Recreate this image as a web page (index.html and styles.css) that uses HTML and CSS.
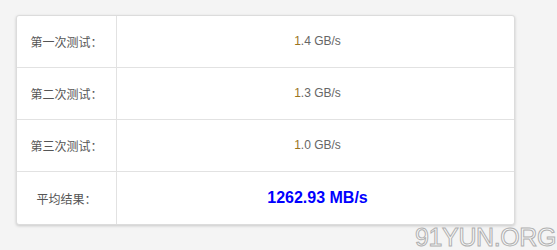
FILE: index.html
```html
<!DOCTYPE html>
<html lang="zh">
<head>
<meta charset="utf-8">
<link rel="stylesheet" href="styles.css">
</head>
<body>
<div class="card">
  <div class="row">
    <div class="label">第一次测试：</div>
    <div class="value"><span class="lead">1</span>.4 GB/s</div>
  </div>
  <div class="row">
    <div class="label">第二次测试：</div>
    <div class="value"><span class="lead">1</span>.3 GB/s</div>
  </div>
  <div class="row">
    <div class="label">第三次测试：</div>
    <div class="value"><span class="lead">1</span>.0 GB/s</div>
  </div>
  <div class="row last">
    <div class="label">平均结果：</div>
    <div class="value big">1262.93 MB/s</div>
  </div>
</div>
<div class="watermark">91YUN.ORG</div>
</body>
</html>
```
FILE: styles.css
```css
html, body {
  margin: 0;
  background: #f4f4f4;
}
body {
  padding: 15px 16px;
  width: 557px;
  height: 250px;
  box-sizing: border-box;
  position: relative;
  overflow: hidden;
  font-family: "Liberation Sans", Arial, "Noto Sans CJK SC", sans-serif;
}
.card {
  width: 499px;
  box-sizing: border-box;
  background: #fff;
  border: 1px solid #dcdcdc;
  border-radius: 3px;
  box-shadow: 0 1px 3px rgba(0,0,0,0.18);
}
.row {
  display: grid;
  grid-template-columns: 100px 1fr;
  height: 52px;
  border-bottom: 1px solid #e2e2e2;
  box-sizing: border-box;
}
.row.last {
  border-bottom: none;
  height: 52px;
}
.label {
  border-right: 1px solid #e2e2e2;
  display: flex;
  align-items: center;
  justify-content: center;
  font-family: "Noto Sans CJK SC", sans-serif;
  font-size: 12px;
  color: #555;
}
.value {
  display: flex;
  align-items: center;
  justify-content: center;
  font-size: 12px;
  color: #666;
  padding-left: 4px;
  padding-bottom: 2px;
}
.lead {
  color: #9a7420;
}
.value.big {
  font-size: 16px;
  font-weight: bold;
  color: #0000ff;
  padding-bottom: 0;
}
.watermark {
  position: absolute;
  right: 1px;
  bottom: 0;
  font-family: "Liberation Sans", Arial, sans-serif;
  font-size: 25px;
  line-height: 26px;
  letter-spacing: -0.4px;
  color: #fafafa;
  -webkit-text-stroke: 1px #b0b0b0;
}
```
